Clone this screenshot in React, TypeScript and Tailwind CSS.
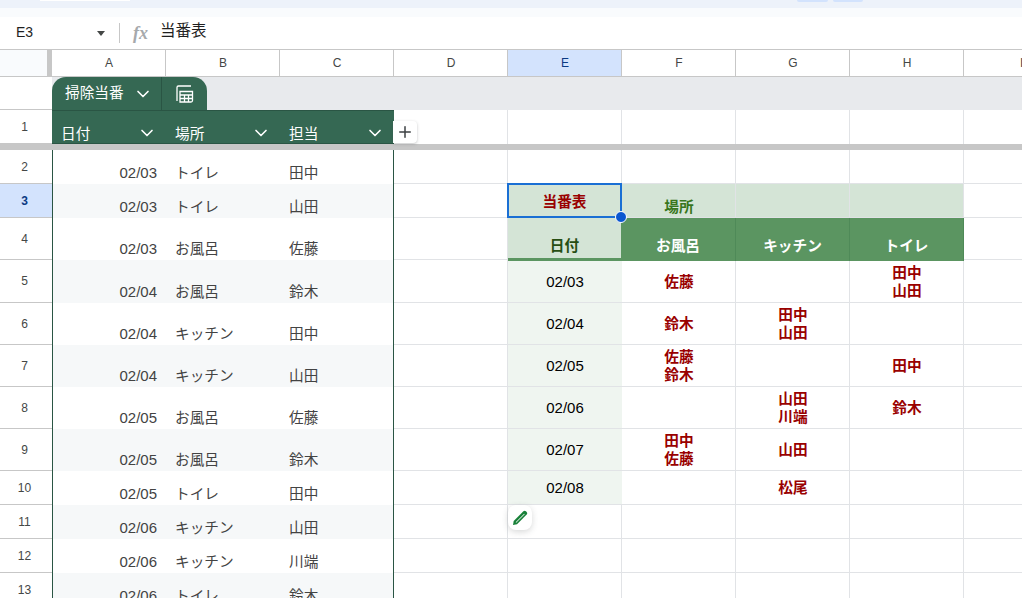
import { ChevronDown, Plus } from "lucide-react";
import type { ReactNode } from "react";

const columns = ["A", "B", "C", "D", "E", "F", "G", "H"];

// left table (filter view over columns A-C)
const duties = [
  { num: 2, h: "h-[34px]", date: "02/03", place: "トイレ", person: "田中" },
  { num: 3, h: "h-[34px]", date: "02/03", place: "トイレ", person: "山田" },
  { num: 4, h: "h-[42px]", date: "02/03", place: "お風呂", person: "佐藤" },
  { num: 5, h: "h-[43px]", date: "02/04", place: "お風呂", person: "鈴木" },
  { num: 6, h: "h-[42px]", date: "02/04", place: "キッチン", person: "田中" },
  { num: 7, h: "h-[42px]", date: "02/04", place: "キッチン", person: "山田" },
  { num: 8, h: "h-[42px]", date: "02/05", place: "お風呂", person: "佐藤" },
  { num: 9, h: "h-[42px]", date: "02/05", place: "お風呂", person: "鈴木" },
  { num: 10, h: "h-[34px]", date: "02/05", place: "トイレ", person: "田中" },
  { num: 11, h: "h-[34px]", date: "02/06", place: "キッチン", person: "山田" },
  { num: 12, h: "h-[34px]", date: "02/06", place: "キッチン", person: "川端" },
  { num: 13, h: "h-[34px]", date: "02/06", place: "トイレ", person: "鈴木" },
];

// pivot table rows, keyed by sheet row number
const pivot: Record<number, string[][]> = {
  5: [["02/03"], ["佐藤"], [], ["田中", "山田"]],
  6: [["02/04"], ["鈴木"], ["田中", "山田"], []],
  7: [["02/05"], ["佐藤", "鈴木"], [], ["田中"]],
  8: [["02/06"], [], ["山田", "川端"], ["鈴木"]],
  9: [["02/07"], ["田中", "佐藤"], ["山田"], []],
  10: [["02/08"], [], ["松尾"], []],
};

function RowHeader({ num, active }: { num: number; active?: boolean }) {
  return (
    <div
      className={`flex w-[52px] shrink-0 items-center justify-center border-b border-[#c7c7c7] pr-[3px] text-[12px] ${
        active ? "bg-[#d3e3fd] font-bold text-[#0b3a82]" : "bg-white text-[#444746]"
      }`}
    >
      {num}
    </div>
  );
}

function GridCell({ children, className = "" }: { children?: ReactNode; className?: string }) {
  return (
    <div className={`flex w-[114px] shrink-0 flex-col items-center justify-center border-r border-b border-[#e1e3e6] text-[14.67px] leading-[18px] ${className}`}>
      {children}
    </div>
  );
}

function EmptyCells() {
  return <div className="flex-1 border-b border-[#e1e3e6]" />;
}

function HeaderFilter({ label }: { label: string }) {
  return (
    <div className="flex w-[114px] shrink-0 items-end justify-between pr-[9px] pl-[9px] text-[14.67px] leading-[18px] text-white">
      <span>{label}</span>
      <ChevronDown size={20} strokeWidth={2} />
    </div>
  );
}

function CalcIcon() {
  return (
    <svg width="20" height="20" viewBox="0 0 20 20" fill="none" stroke="#ffffff" strokeWidth="1.3">
      <path d="M2 17V3.5A1.5 1.5 0 0 1 3.5 2H16" />
      <path d="M5 7.5h12.5v9a1.5 1.5 0 0 1-1.5 1.5H5z" />
      <path d="M5 11h12.5M5 14.5h12.5M9.5 11v7M13.5 11v7" />
    </svg>
  );
}

function PencilIcon() {
  return (
    <svg width="20" height="20" viewBox="0 0 20 20" fill="none">
      <path d="M3 17l.7-4L13.4 3.300a1.8 1.800 0 0 1 2.500 0l.8.800a1.800 1.800 0 0 1 0 2.500L7 16.300z" fill="#188038" />
      <path d="M5.700 14.300l8.500-8.500.5.500-8.500 8.500z" fill="#ffffff" />
    </svg>
  );
}

function DutyCells({ date, place, person, tinted }: { date: string; place: string; person: string; tinted: boolean }) {
  const bg = tinted ? "bg-[#f6f8f9]" : "bg-white";
  return (
    <div className={`flex w-[342px] shrink-0 border-x border-[#2a5544] text-[14.67px] leading-[18px] text-[#434343] ${bg}`}>
      <div className="flex w-[113px] shrink-0 items-end justify-end pr-[9px] pb-[2px] text-[15px]">{date}</div>
      <div className="flex w-[114px] shrink-0 items-end pb-[2px] pl-[9px]">{place}</div>
      <div className="flex w-[113px] shrink-0 items-end pb-[2px] pl-[9px]">{person}</div>
    </div>
  );
}

export default function App() {
  return (
    <div className="flex h-[598px] w-[1022px] flex-col overflow-hidden bg-white [font-family:'Liberation_Sans','Noto_Sans_CJK_JP',sans-serif]">
      {/* browser/app chrome cut off at the top */}
      <div className="flex h-[8px] shrink-0 items-start bg-[#edf2fa]">
        <div className="ml-[40px] h-[1px] w-[90px] bg-white" />
        <div className="ml-[667px] h-[2px] w-[31px] rounded-b-sm bg-[#d3e3fd]" />
        <div className="ml-[5px] h-[2px] w-[30px] rounded-b-sm bg-[#d3e3fd]" />
      </div>
      <div className="h-[9px] shrink-0 bg-[#f9fbfd]" />

      {/* formula bar */}
      <div className="flex h-[33px] shrink-0 items-center border-b border-[#c7c7c7] bg-white">
        <span className="-mt-[2px] ml-[16px] w-[81px] text-[14px] text-[#1f1f1f]">E3</span>
        <div className="h-0 w-0 border-x-[4.5px] border-t-[5px] border-x-transparent border-t-[#444746]" />
        <div className="ml-[14px] h-[20px] w-px bg-[#c7c7c7]" />
        <span className="ml-[13px] w-[27px] text-[18px] leading-none font-bold text-[#a6a9ac] italic [font-family:'Liberation_Serif',serif]">fx</span>
        <span className="-mt-[4px] text-[15.5px] text-[#1f1f1f]">当番表</span>
      </div>

      {/* column letters */}
      <div className="flex h-[27px] shrink-0 border-b border-[#c7c7c7] bg-white">
        <div className="w-[47px] shrink-0 bg-[#f9fbfd]" />
        <div className="w-[5px] shrink-0 bg-[#c7c7c7]" />
        {columns.map((col) => (
          <div
            key={col}
            className={`flex w-[114px] shrink-0 items-center justify-center border-r border-[#c7c7c7] pl-[1px] text-[12px] ${
              col === "E" ? "bg-[#d3e3fd] text-[#0b3a82]" : "text-[#444746]"
            }`}
          >
            {col}
          </div>
        ))}
        <div className="flex-1 pl-[56px] text-[12px] leading-[26px] text-[#444746]">I</div>
      </div>

      {/* table name band */}
      <div className="flex h-[33px] shrink-0">
        <div className="w-[52px] shrink-0 border-b border-[#c7c7c7] bg-white" />
        <div className="flex flex-1 bg-[#e8eaed]">
          <div className="flex w-[155px] rounded-t-[14px] bg-[#356853] text-white">
            <div className="flex w-[110px] items-center border-r border-[#2a5544] pl-[13px]">
              <span className="-mt-[1px] text-[14.67px]">掃除当番</span>
              <ChevronDown size={20} strokeWidth={2} className="ml-[9px]" />
            </div>
            <div className="flex flex-1 items-center justify-center pl-[1px]">
              <CalcIcon />
            </div>
          </div>
        </div>
      </div>

      {/* row 1: table header */}
      <div className="flex h-[34px] shrink-0">
        <RowHeader num={1} />
        <div className="flex shrink-0 border-y border-[#2a5544] bg-[#356853]">
          <HeaderFilter label="日付" />
          <HeaderFilter label="場所" />
          <HeaderFilter label="担当" />
        </div>
        <div className="relative w-[114px] shrink-0 border-r border-[#e1e3e6]">
          <div className="absolute top-[11px] -left-[1px] flex h-[22px] w-[24px] items-center justify-center rounded-r-[4px] bg-white shadow-[0_1px_3px_rgba(60,64,67,0.3)]">
            <Plus size={18} strokeWidth={2} className="text-[#3c4043]" />
          </div>
        </div>
        {columns.slice(4).map((col) => (
          <div key={col} className="w-[114px] shrink-0 border-r border-[#e1e3e6]" />
        ))}
      </div>

      {/* freeze divider */}
      <div className="h-[6px] shrink-0 bg-[#c7c7c7]" />

      {duties.map((row, i) => {
        const cells = pivot[row.num];
        return (
          <div key={row.num} className={`flex shrink-0 ${row.h}`}>
            <RowHeader num={row.num} active={row.num === 3} />
            <DutyCells date={row.date} place={row.place} person={row.person} tinted={i % 2 === 1} />
            <GridCell />

            {row.num === 3 ? (
              <>
                <div className="relative -mt-[1px] -ml-[1px] flex h-[35px] w-[115px] shrink-0 items-center justify-center border-2 border-[#1a6fd4] bg-[#d4e4d6] pt-[2px] text-[14.67px] leading-[18px] font-bold text-[#990000]">
                  当番表
                  <div className="absolute -right-[7px] -bottom-[7px] z-20 h-[12px] w-[12px] rounded-full border border-white bg-[#0b57d0]" />
                </div>
                <GridCell className="!justify-end bg-[#d4e4d6] pb-[1px] pl-[1px] font-bold text-[#38761d]">場所</GridCell>
                <GridCell className="bg-[#d4e4d6]" />
                <GridCell className="bg-[#d4e4d6]" />
              </>
            ) : row.num === 4 ? (
              <>
                <div className="relative z-10 flex h-[43px] w-[113px] shrink-0 items-end justify-center border-b-[3px] border-[#5b9561] bg-[#d4e4d6] pb-[3px] text-[14.67px] leading-[18px] font-bold text-[#274e13]">
                  日付
                </div>
                {["お風呂", "キッチン", "トイレ"].map((label, idx) => (
                  <div
                    key={label}
                    className={`relative z-10 flex h-[43px] shrink-0 items-end justify-center border-r border-[#4f8a58] bg-[#5b9561] pb-[6px] text-[14.67px] leading-[18px] font-bold text-white ${
                      idx === 0 ? "w-[115px]" : "w-[114px]"
                    }`}
                  >
                    {label}
                  </div>
                ))}
              </>
            ) : cells ? (
              cells.map((lines, idx) => (
                <GridCell
                  key={idx}
                  className={`${row.num === 5 ? "pt-[2px]" : ""} ${
                    idx === 0 ? "border-r-0 bg-[#eff5f0] text-[15px] text-black" : "pl-[1px] font-bold text-[#990000]"
                  }`}
                >
                  {lines.map((line) => (
                    <span key={line}>{line}</span>
                  ))}
                </GridCell>
              ))
            ) : (
              <>
                <GridCell />
                <GridCell />
                <GridCell />
                <GridCell />
              </>
            )}
            <EmptyCells />
          </div>
        );
      })}

      {/* floating edit button over the sheet */}
      <div className="absolute top-[505px] left-[508px] z-20 flex h-[25px] w-[24px] items-center justify-center rounded-[8px] bg-white shadow-[0_2px_6px_rgba(60,64,67,0.2)]">
        <PencilIcon />
      </div>
    </div>
  );
}
